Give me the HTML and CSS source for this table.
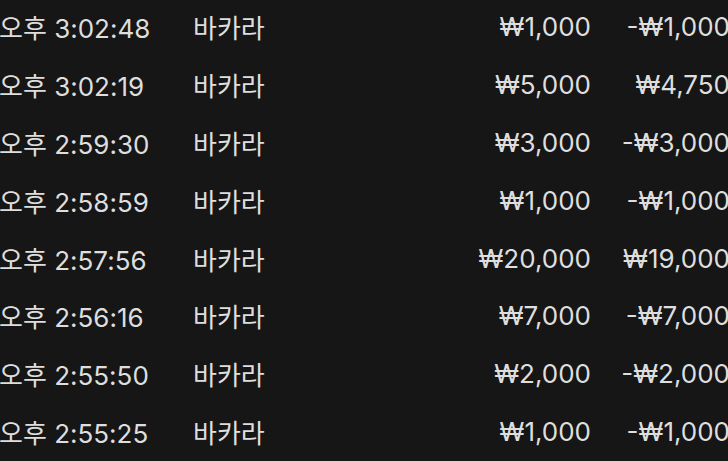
FILE: index.html
```html
<!DOCTYPE html>
<html lang="ko">
<head>
<meta charset="utf-8">
<link rel="stylesheet" href="styles.css">
</head>
<body>
<div class="list">
  <div class="row"><span class="time">오후 3:02:48</span><span class="game">바카라</span><span class="amt">₩1,000</span><span class="pl">-₩1,000</span></div>
  <div class="row"><span class="time">오후 3:02:19</span><span class="game">바카라</span><span class="amt">₩5,000</span><span class="pl">₩4,750</span></div>
  <div class="row"><span class="time">오후 2:59:30</span><span class="game">바카라</span><span class="amt">₩3,000</span><span class="pl">-₩3,000</span></div>
  <div class="row"><span class="time">오후 2:58:59</span><span class="game">바카라</span><span class="amt">₩1,000</span><span class="pl">-₩1,000</span></div>
  <div class="row"><span class="time">오후 2:57:56</span><span class="game">바카라</span><span class="amt">₩20,000</span><span class="pl">₩19,000</span></div>
  <div class="row"><span class="time">오후 2:56:16</span><span class="game">바카라</span><span class="amt">₩7,000</span><span class="pl">-₩7,000</span></div>
  <div class="row"><span class="time">오후 2:55:50</span><span class="game">바카라</span><span class="amt">₩2,000</span><span class="pl">-₩2,000</span></div>
  <div class="row"><span class="time">오후 2:55:25</span><span class="game">바카라</span><span class="amt">₩1,000</span><span class="pl">-₩1,000</span></div>
</div>
</body>
</html>
```
FILE: styles.css
```css
html, body {
  margin: 0;
  padding: 0;
  background: #161616;
  overflow: hidden;
}
body {
  width: 728px;
  height: 461px;
  font-family: Inter, "Noto Sans CJK KR", sans-serif;
  font-size: 26px;
  color: #dedede;
}
.list {
  display: flex;
  flex-direction: column;
  margin-top: -2px;
  margin-left: -1px;
}
.row {
  display: flex;
  align-items: center;
  height: 57.8px;
  white-space: nowrap;
}
.time {
  width: 194px;
  flex: none;
}
.game {
  flex: 1;
}
.amt {
  width: 160px;
  text-align: right;
  flex: none;
}
.pl {
  width: 139px;
  text-align: right;
  flex: none;
  margin-right: -2px;
}
```
